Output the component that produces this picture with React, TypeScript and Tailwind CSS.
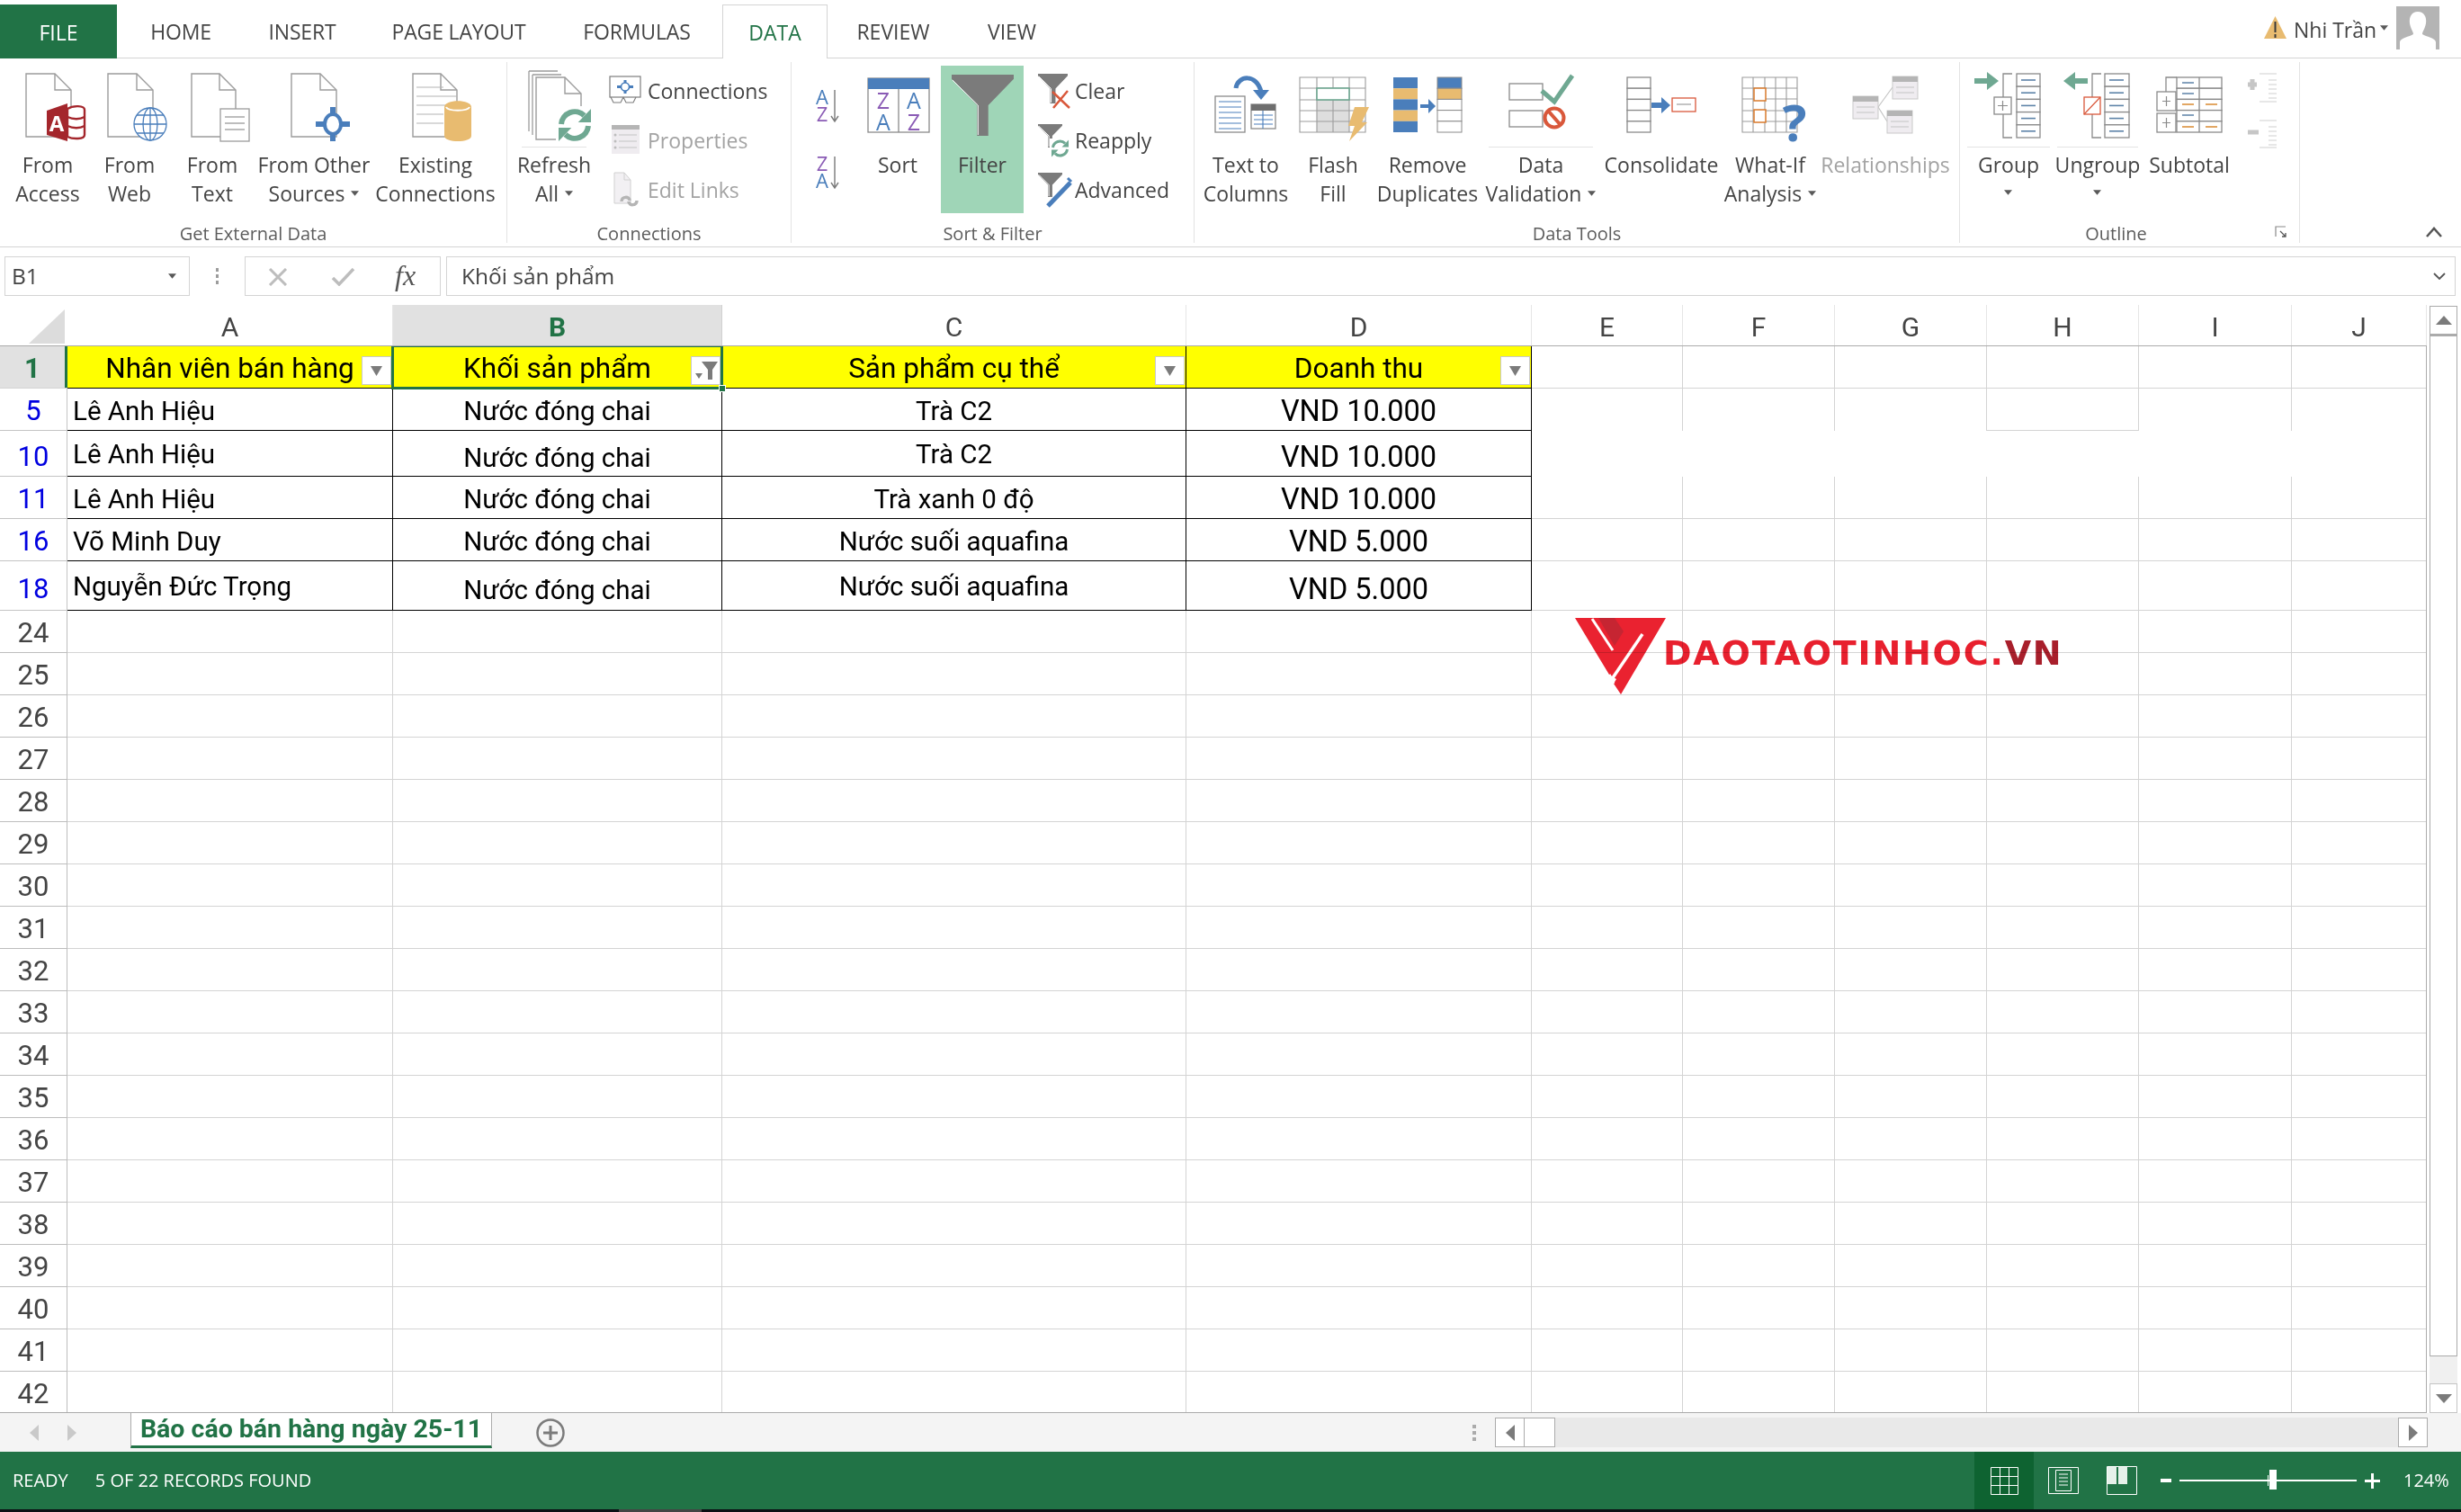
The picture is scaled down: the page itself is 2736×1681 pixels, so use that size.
import type { ReactNode } from 'react'

const BLUE = '#4a7ebb'
const GOLD = '#e8bb70'
const TEAL = '#6fa892'

const Ic = ({ children }: { children: ReactNode }) => (
  <svg viewBox="-50 0 100 80" className="w-[100px] h-[80px] shrink-0 overflow-visible">{children}</svg>
)

const Sm = ({ children }: { children: ReactNode }) => (
  <svg viewBox="0 0 40 36" className="w-[40px] h-[36px] shrink-0 overflow-visible">{children}</svg>
)

const Doc = ({ x, y, w, h, f = 18 }: { x: number; y: number; w: number; h: number; f?: number }) => (
  <g fill="none" stroke="#9c9c9c" strokeWidth="1.4">
    <path d={`M${x} ${y}H${x + w - f}L${x + w} ${y + f}V${y + h}H${x}Z`} fill="#fff" />
    <path d={`M${x + w - f} ${y}V${y + f}H${x + w}`} />
  </g>
)

const Caret = ({ disabled }: { disabled?: boolean }) => (
  <svg viewBox="0 0 10 6" className="inline-block w-[9px] h-[6px] shrink-0">
    <path d="M0 0H10L5 6Z" fill={disabled ? '#aaa' : '#595959'} />
  </svg>
)

const Funnel = ({ x, y, w, h }: { x: number; y: number; w: number; h: number }) => {
  const cx = x + w / 2
  const nw = w * 0.09
  return (
    <g>
      <path
        d={`M${x} ${y}H${x + w}V${y + h * 0.07}L${cx + nw} ${y + h * 0.5}V${y + h}H${cx - nw}V${y + h * 0.5}L${x} ${y + h * 0.07}Z`}
        fill="#7b7b7b"
      />
      <path d={`M${x + 1} ${y + h * 0.09}L${cx - nw + 1} ${y + h * 0.5}V${y + h - 1}`} fill="none" stroke="#fff" strokeWidth="1" />
    </g>
  )
}

const Cycle = ({ cx, cy, r, w, color }: { cx: number; cy: number; r: number; w: number; color: string }) => (
  <g fill="none" stroke={color} strokeWidth={w}>
    <path d={`M${cx - r} ${cy - 1}A${r} ${r} 0 0 1 ${cx + r * 0.7} ${cy - r * 0.7}`} />
    <path d={`M${cx + r} ${cy + 1}A${r} ${r} 0 0 1 ${cx - r * 0.7} ${cy + r * 0.7}`} />
    <path d={`M${cx + r * 0.25} ${cy - r * 0.2}H${cx + r + w / 2}V${cy - r - w / 2}Z`} fill={color} stroke="none" />
    <path d={`M${cx - r * 0.25} ${cy + r * 0.2}H${cx - r - w / 2}V${cy + r + w / 2}Z`} fill={color} stroke="none" />
  </g>
)

const Rows = ({ x, y, w, rows, h, color = '#8a8a8a' }: { x: number; y: number; w: number; rows: number; h: number; color?: string }) => (
  <g fill="#fff" stroke={color} strokeWidth="1.3">
    {Array.from({ length: rows }, (_, i) => (
      <rect key={i} x={x} y={y + (h / rows) * i} width={w} height={h / rows} />
    ))}
  </g>
)

const FromAccess = () => (
  <Ic>
    <Doc x={-24} y={2} w={50} h={70} />
    <path d="M-1 43L22 35V77L-1 70Z" fill="#a4262c" />
    <path d="M22 41C28 37 41 37 41 42V70C41 75 28 75 22 72Z" fill="#fff" stroke="#a4262c" strokeWidth="2.4" />
    <path d="M22 50C28 53 36 53 41 50M22 60C28 63 36 63 41 60" fill="none" stroke="#a4262c" strokeWidth="2.4" />
    <text x="10" y="66" textAnchor="middle" fill="#fff" fontSize="24" fontWeight="700" fontFamily="Open Sans">A</text>
  </Ic>
)

const FromWeb = () => (
  <Ic>
    <Doc x={-24} y={2} w={50} h={70} />
    <g fill="#fff" stroke={BLUE} strokeWidth="1.3">
      <circle cx="23" cy="58" r="18" />
      <ellipse cx="23" cy="58" rx="8" ry="18" />
      <path d="M23 40V76M5 58H41M8 48H38M8 68H38" fill="none" />
    </g>
  </Ic>
)

const FromText = () => (
  <Ic>
    <Doc x={-23} y={2} w={49} h={70} />
    <rect x="9" y="41" width="32" height="36" fill="#fff" stroke="#9c9c9c" strokeWidth="1.3" />
    <path d="M14 50H36M14 57H36M14 64H36" stroke="#a8a8a8" strokeWidth="1.3" />
  </Ic>
)

const FromOther = () => (
  <Ic>
    <Doc x={-25} y={2} w={50} h={70} />
    <path d="M21 39V77M2 58H40" stroke={BLUE} strokeWidth="6" />
    <ellipse cx="21" cy="58" rx="9" ry="11" fill="#fff" stroke={BLUE} strokeWidth="4" />
  </Ic>
)

const Existing = () => (
  <Ic>
    <Doc x={-25} y={2} w={49} h={70} />
    <path d="M-21 17H9M-21 27H24M-21 37H24M-21 47H9M-21 57H9" stroke="#b4b4b4" strokeWidth="1.2" />
    <path d="M10 39C10 30 40 30 40 39V71C40 79 10 79 10 71Z" fill={GOLD} />
    <path d="M12 39C14 44 36 44 38 39" fill="none" stroke="#fff" strokeWidth="2" />
  </Ic>
)

const Refresh = () => (
  <Ic>
    <path d="M-28 -1H4M-28 -1V66M-24 3H8M-24 3V70" fill="none" stroke="#9c9c9c" strokeWidth="1.3" />
    <Doc x={-20} y={6} w={50} h={69} />
    <rect x="2" y="38" width="38" height="40" fill="#fff" />
    <Cycle cx={23} cy={59} r={15} w={6} color={TEAL} />
  </Ic>
)

const SortAsc = ({ top, bottom, topCol, botCol }: { top: string; bottom: string; topCol: string; botCol: string }) => (
  <svg viewBox="0 0 40 40" className="w-[40px] h-[40px] shrink-0">
    <text x="14" y="18" textAnchor="middle" fontSize="22" fill={topCol} fontFamily="Open Sans">{top}</text>
    <text x="14" y="37" textAnchor="middle" fontSize="22" fill={botCol} fontFamily="Open Sans">{bottom}</text>
    <path d="M28 2V36M24 31L28 37L32 31" fill="none" stroke="#7a7a7a" strokeWidth="1.4" />
  </svg>
)

const SortBig = () => (
  <Ic>
    <rect x="-33" y="7" width="68" height="60" fill="#fff" stroke="#8a8a8a" strokeWidth="1.3" />
    <rect x="-33" y="7" width="68" height="12" fill={BLUE} />
    <path d="M1 19V67" stroke="#8a8a8a" strokeWidth="1.3" />
    <g fontSize="25" fontFamily="Open Sans" textAnchor="middle">
      <text x="-16" y="41" fill="#8a5bb5">Z</text>
      <text x="18" y="41" fill={BLUE}>A</text>
      <text x="-16" y="65" fill={BLUE}>A</text>
      <text x="18" y="65" fill="#8a5bb5">Z</text>
    </g>
  </Ic>
)

const FilterBig = () => (
  <Ic>
    <Funnel x={-34} y={3} w={69} h={68} />
  </Ic>
)

const TextToCols = () => (
  <Ic>
    <rect x="-34" y="27" width="33" height="40" fill="#fff" stroke="#8a8a8a" strokeWidth="1.3" />
    <path d="M-30 33H-5M-30 39H-5M-30 45H-5M-30 51H-5M-30 57H-5M-30 63H-5" stroke={BLUE} strokeWidth="1.2" />
    <rect x="6" y="36" width="27" height="27" fill="#fff" stroke="#8a8a8a" strokeWidth="1.3" />
    <rect x="6" y="36" width="27" height="7" fill="#6e6e6e" />
    <path d="M9 48H30M9 53H30M9 58H30M19 43V63" stroke={BLUE} strokeWidth="1.1" />
    <path d="M-11 18C-9 4 12 1 17 22" fill="none" stroke={BLUE} strokeWidth="5" />
    <path d="M8 20H26L17 31Z" fill={BLUE} />
  </Ic>
)

const FlashFill = () => (
  <Ic>
    <rect x="-37" y="6" width="73" height="61" fill="#fff" />
    <rect x="-18" y="31" width="36" height="36" fill="#dedede" />
    <path d="M-37 6H36V67H-37ZM-18 6V67M0 6V67M18 6V67M-37 18H36M-37 31H36M-37 43H36M-37 55H36" fill="none" stroke="#9c9c9c" strokeWidth="1.1" />
    <rect x="-18" y="18" width="36" height="13" fill="#fff" stroke={TEAL} strokeWidth="1.6" />
    <path d="M24 39H40L32 56H38L18 77L24 60H17Z" fill={GOLD} />
  </Ic>
)

const RemoveDup = () => {
  const left = [BLUE, GOLD, BLUE, GOLD, BLUE]
  const right = [BLUE, GOLD, '#fff', '#fff', '#fff']
  return (
    <Ic>
      {left.map((c, i) => (
        <rect key={i} x="-38" y={6 + i * 12.2} width="27" height="12.2" fill={c} />
      ))}
      {right.map((c, i) => (
        <rect key={i} x="11" y={6 + i * 12.2} width="27" height="12.2" fill={c} stroke="#8a8a8a" strokeWidth="1" />
      ))}
      <path d="M-8 36H1V30L9 38L1 46V40H-8Z" fill={BLUE} />
    </Ic>
  )
}

const DataValidation = () => (
  <Ic>
    <rect x="-35" y="13" width="37" height="18" fill="#fff" stroke="#8a8a8a" strokeWidth="1.3" />
    <rect x="-35" y="43" width="37" height="18" fill="#fff" stroke="#8a8a8a" strokeWidth="1.3" />
    <path d="M1 21L15 33L35 4" fill="none" stroke={TEAL} strokeWidth="5" />
    <circle cx="15" cy="51" r="10.5" fill="#fff" stroke="#d9583b" strokeWidth="4" />
    <path d="M8 43L22 59" stroke="#d9583b" strokeWidth="4" />
  </Ic>
)

const Consolidate = () => (
  <Ic>
    <Rows x={-38} y={6} w={26} rows={5} h={61} />
    <path d="M-11 34H0V28L10 37L0 46V40H-11Z" fill={BLUE} />
    <rect x="12" y="29" width="26" height="15" fill="#fff" stroke="#d9583b" strokeWidth="1.3" />
    <path d="M17 36H33" stroke="#9c9c9c" strokeWidth="1.2" />
  </Ic>
)

const WhatIf = () => (
  <Ic>
    <path d="M-31 6H30V67H-31ZM-19 6V67M-6 6V67M6 6V67M18 6V67M-31 18H30M-31 30H30M-31 43H30M-31 55H30" fill="#fff" stroke="#9c9c9c" strokeWidth="1.1" />
    <rect x="-18" y="18" width="13" height="14" fill="#fff" stroke="#d97a2b" strokeWidth="1.5" />
    <rect x="-18" y="42" width="13" height="14" fill="#fff" stroke="#d97a2b" strokeWidth="1.5" />
    <text x="27" y="77" textAnchor="middle" fontSize="56" fontWeight="700" fill={BLUE} fontFamily="Open Sans">?</text>
  </Ic>
)

const MiniTable = ({ x, y }: { x: number; y: number }) => (
  <g>
    <rect x={x} y={y} width="28" height="25" fill="#efecf0" stroke="#c9c9c9" strokeWidth="1" />
    <rect x={x} y={y} width="28" height="6" fill="#b5b5b5" />
    <path d={`M${x + 4} ${y + 12}H${x + 24}M${x + 4} ${y + 18}H${x + 24}`} stroke="#c4c4c4" strokeWidth="1.2" />
  </g>
)

const Relationships = () => (
  <Ic>
    <path d="M-8 39L8 17M-8 39L2 55" fill="none" stroke="#c4c4c4" strokeWidth="1.2" />
    <MiniTable x={-36} y={27} />
    <MiniTable x={8} y={5} />
    <MiniTable x={2} y={43} />
  </Ic>
)

const Dashes = ({ x, y, n, color = '#5d83a8' }: { x: number; y: number; n: number; color?: string }) => (
  <g>
    {Array.from({ length: n }, (_, i) => (
      <path key={i} d={`M${x} ${y + i * 14.2}H${x + 16}`} stroke={color} strokeWidth="1.6" />
    ))}
  </g>
)

const GroupIcon = () => (
  <Ic>
    <path d="M-38 7H-24V0L-11 10L-24 20V13H-38Z" fill={TEAL} />
    <path d="M4 2H-6V73H4" fill="none" stroke="#8a8a8a" strokeWidth="1.3" />
    <rect x="-16" y="28" width="19" height="19" fill="#fff" stroke="#8a8a8a" strokeWidth="1.3" />
    <path d="M-12 37.5H-1M-6.5 32V43" stroke="#8a8a8a" strokeWidth="1.2" />
    <Rows x={9} y={2} w={26} rows={5} h={71} />
    <Dashes x={14} y={9} n={5} />
  </Ic>
)

const UngroupIcon = () => (
  <Ic>
    <path d="M-11 7H-25V0L-38 10L-25 20V13H-11Z" fill={TEAL} />
    <path d="M4 2H-6V73H4" fill="none" stroke="#8a8a8a" strokeWidth="1.3" />
    <rect x="-15" y="28" width="18" height="19" fill="#fff" stroke="#d9583b" strokeWidth="1.3" />
    <path d="M-15 47L3 28" stroke="#d9583b" strokeWidth="1.2" />
    <Rows x={8} y={2} w={27} rows={5} h={71} />
    <Dashes x={13} y={9} n={5} />
  </Ic>
)

const Subtotal = () => (
  <Ic>
    <path d="M-14 6H-26V22" fill="none" stroke="#8a8a8a" strokeWidth="1.3" />
    <Rows x={-14} y={6} w={50} rows={5} h={61} />
    <path d="M11 6V67" stroke="#8a8a8a" strokeWidth="1.3" />
    <rect x="-36" y="22" width="21" height="21" fill="#fff" stroke="#8a8a8a" strokeWidth="1.3" />
    <rect x="-36" y="46" width="21" height="21" fill="#fff" stroke="#8a8a8a" strokeWidth="1.3" />
    <path d="M-30 32.5H-21M-25.500 27V38M-30 56.500H-21M-25.500 51V62" stroke="#8a8a8a" strokeWidth="1.2" />
    <path d="M-8 12H5M-8 24H5M-8 48H5" stroke="#5d83a8" strokeWidth="1.5" />
    <path d="M-8 36H5M18 36H31M-8 61H5M18 61H31" stroke="#d98a32" strokeWidth="1.5" />
  </Ic>
)

const DetailIcon = () => (
  <svg viewBox="0 0 34 84" className="w-[34px] h-[84px] shrink-0">
    <path d="M1 13H11M6 7V19" stroke="#c6c6c6" strokeWidth="5" />
    <path d="M14 1H33M24 8H33M24 13H33M24 18H33M24 23H33M24 28H33M14 32H33" stroke="#cfcfcf" strokeWidth="1.1" />
    <path d="M1 66H13" stroke="#c6c6c6" strokeWidth="5" />
    <path d="M14 53H33M24 60H33M24 65H33M24 70H33M24 75H33M24 80H33M14 83H33" stroke="#cfcfcf" strokeWidth="1.1" />
  </svg>
)

const ConnSmall = () => (
  <Sm>
    <rect x="6" y="1" width="34" height="23" fill="#fff" stroke="#7d7d7d" strokeWidth="1.2" />
    <path d="M23 5V20M14 12.500H32" stroke={BLUE} strokeWidth="3" />
    <circle cx="23" cy="12.500" r="4.500" fill="#fff" stroke={BLUE} strokeWidth="1.6" />
    <path d="M7 24L10 30H18L21 24M21 24L24 30H32L35 24" fill="none" stroke="#7d7d7d" strokeWidth="1.1" />
  </Sm>
)

const PropsSmall = () => (
  <Sm>
    <rect x="8" y="0" width="31" height="32" fill="#efecf0" />
    <rect x="8" y="0" width="31" height="5" fill="#b5b5b5" />
    <path d="M16 11H36M16 18H36M16 25H36" stroke="#c4c4c4" strokeWidth="1.2" />
    <circle cx="12" cy="11" r="1.500" fill="#bdbdbd" />
    <circle cx="12" cy="18" r="1.500" fill="#bdbdbd" />
    <circle cx="12" cy="25" r="1.500" fill="#bdbdbd" />
  </Sm>
)

const LinksSmall = () => (
  <Sm>
    <path d="M11 -2H22L29 6V32H11Z" fill="#f2f0f3" stroke="#d0d0d0" strokeWidth="1" />
    <path d="M22 -2V6H29" fill="none" stroke="#d0d0d0" strokeWidth="1" />
    <path d="M19 30C19 24 28 24 28 29M36 29C36 35 27 35 27 30" fill="none" stroke="#b5b5b5" strokeWidth="3.500" />
  </Sm>
)

const ClearSmall = () => (
  <Sm>
    <Funnel x={4} y={-2} w={33} h={33} />
    <path d="M20 18L39 36M37 17L21 36" stroke="#d9583b" strokeWidth="2.500" />
  </Sm>
)

const ReapplySmall = () => (
  <Sm>
    <Funnel x={4} y={-1} w={27} h={26} />
    <rect x="17" y="15" width="23" height="22" fill="#fff" />
    <Cycle cx={28.500} cy={26} r={8} w={3} color={TEAL} />
  </Sm>
)

const AdvancedSmall = () => (
  <Sm>
    <Funnel x={4} y={-2} w={27} h={27} />
    <path d="M40 9L15 35" stroke={BLUE} strokeWidth="5" />
    <path d="M37 4L41 8" stroke={BLUE} strokeWidth="3" />
  </Sm>
)

const Big = ({
  w,
  icon,
  lines,
  caretLine,
  split,
  disabled,
}: {
  w: string
  icon: ReactNode
  lines: string[]
  caretLine?: number
  split?: boolean
  disabled?: boolean
}) => (
  <div className={`relative flex flex-col items-center pt-[11px] shrink-0 ${w}`}>
    {icon}
    {split && <div className="absolute left-[4px] right-[4px] top-[94px] h-px bg-[#e4e4e4]" />}
    <div className={`mt-[7px] flex flex-col items-center text-[23px] leading-[32px] whitespace-nowrap ${disabled ? 'text-[#a3a3a3]' : 'text-[#444]'}`}>
      {lines.map((l, i) => (
        <span key={i} className="flex items-center gap-[7px] h-[32px]">
          {l}
          {caretLine === i && <Caret />}
        </span>
      ))}
    </div>
  </div>
)

const SmallBtn = ({ icon, label, disabled, gap }: { icon: ReactNode; label: string; disabled?: boolean; gap: string }) => (
  <div className="flex items-center h-[55px]">
    {icon}
    <span className={`text-[23px] whitespace-nowrap ${gap} ${disabled ? 'text-[#a3a3a3]' : 'text-[#444]'}`}>{label}</span>
  </div>
)

const Group = ({ w, label, pad, labelPad, children }: { w: string; label: string; pad: string; labelPad?: string; children: ReactNode }) => (
  <div className={`flex flex-col shrink-0 border-r border-[#e3e3e3] ${w}`}>
    <div className={`flex flex-1 ${pad}`}>{children}</div>
    <div className={`h-[20px] text-center text-[20px] leading-[20px] text-[#5c5c5c] ${labelPad ?? ''}`}>{label}</div>
  </div>
)

const tabs = [
  { name: 'HOME', w: 'w-[142px]' },
  { name: 'INSERT', w: 'w-[128px]' },
  { name: 'PAGE LAYOUT', w: 'w-[220px]' },
  { name: 'FORMULAS', w: 'w-[176px]' },
]

const TopBar = () => (
  <div className="flex items-end h-[65px] border-b border-[#d4d4d4] shrink-0 text-[23px] text-[#444]">
    <div className="w-[130px] h-[60px] -mb-px bg-[#217346] text-white flex items-center justify-center pt-[2px]">FILE</div>
    {tabs.map(t => (
      <div key={t.name} className={`h-[60px] flex items-center justify-center pt-[2px] tracking-[-0.15px] ${t.w}`}>{t.name}</div>
    ))}
    <div className="w-[7px]" />
    <div className="w-[117px] h-[60px] -mb-px bg-white border border-b-0 border-[#d4d4d4] text-[#217346] flex items-center justify-center pt-[2px]">DATA</div>
    <div className="w-[146px] h-[60px] flex items-center justify-center pt-[2px]">REVIEW</div>
    <div className="w-[118px] h-[60px] flex items-center justify-center pt-[2px]">VIEW</div>
    <div className="ml-auto flex items-center h-[60px] pr-[24px] mb-[3px]">
      <svg viewBox="0 0 25 26" className="w-[25px] h-[26px] mr-[8px]">
        <path d="M12.500 0L25 25H0Z" fill={GOLD} />
        <path d="M12.500 6V18M12.500 20V24" stroke="#3a3a3a" strokeWidth="2" />
      </svg>
      <span className="w-[89px] pt-[5px] text-[23px] whitespace-nowrap">Nhi Trần</span>
      <span className="ml-[7px] mr-[9px] flex"><Caret /></span>
      <svg viewBox="0 0 48 48" className="w-[48px] h-[48px]">
        <rect width="48" height="48" fill="#b4b4b4" />
        <path d="M24 6C31 6 34 12 33 19C32 25 29 28 29 31C33 34 44 35 44 40V48H4V40C4 35 15 34 19 31C19 28 16 25 15 19C14 12 17 6 24 6Z" fill="#fff" />
      </svg>
    </div>
  </div>
)

const Ribbon = () => (
  <div className="relative flex h-[210px] shrink-0 py-[4px] border-b border-[#d4d4d4]">
    <Group w="w-[564px]" label="Get External Data" pad="pl-[8px]">
      <Big w="w-[90px]" icon={<FromAccess />} lines={['From', 'Access']} />
      <Big w="w-[92px]" icon={<FromWeb />} lines={['From', 'Web']} />
      <Big w="w-[92px]" icon={<FromText />} lines={['From', 'Text']} />
      <Big w="w-[132px] ml-[1px]" icon={<FromOther />} lines={['From Other', 'Sources']} caretLine={1} />
      <Big w="w-[138px]" icon={<Existing />} lines={['Existing', 'Connections']} />
    </Group>
    <Group w="w-[316px]" label="Connections" pad="pl-[12px]">
      <Big w="w-[80px]" icon={<Refresh />} lines={['Refresh', 'All']} caretLine={1} split />
      <div className="ml-[16px] mt-[5px] flex flex-col">
        <SmallBtn icon={<ConnSmall />} label="Connections" gap="ml-[8px]" />
        <SmallBtn icon={<PropsSmall />} label="Properties" gap="ml-[8px]" disabled />
        <SmallBtn icon={<LinksSmall />} label="Edit Links" gap="ml-[8px]" disabled />
      </div>
    </Group>
    <Group w="w-[448px]" label="Sort & Filter" pad="pl-[10px]">
      <div className="w-[60px] flex flex-col items-center pt-[29px] gap-[34px]">
        <SortAsc top="A" bottom="Z" topCol={BLUE} botCol="#8a5bb5" />
        <SortAsc top="Z" bottom="A" topCol="#8a5bb5" botCol={BLUE} />
      </div>
      <Big w="w-[96px]" icon={<SortBig />} lines={['Sort']} />
      <div className="flex flex-col items-center w-[92px] h-[164px] mt-[4px] pt-[7px] bg-[#9fd5b7] shrink-0">
        <FilterBig />
        <span className="mt-[7px] text-[23px] leading-[32px] text-[#444]">Filter</span>
      </div>
      <div className="ml-[12px] mt-[5px] flex flex-col">
        <SmallBtn icon={<ClearSmall />} label="Clear" gap="ml-[5px]" />
        <SmallBtn icon={<ReapplySmall />} label="Reapply" gap="ml-[5px]" />
        <SmallBtn icon={<AdvancedSmall />} label="Advanced" gap="ml-[5px]" />
      </div>
    </Group>
    <Group w="w-[851px]" label="Data Tools" pad="pl-[1px]">
      <Big w="w-[112px]" icon={<TextToCols />} lines={['Text to', 'Columns']} />
      <Big w="w-[82px]" icon={<FlashFill />} lines={['Flash', 'Fill']} />
      <Big w="w-[128px]" icon={<RemoveDup />} lines={['Remove', 'Duplicates']} />
      <Big w="w-[124px]" icon={<DataValidation />} lines={['Data', 'Validation']} caretLine={1} split />
      <Big w="w-[144px]" icon={<Consolidate />} lines={['Consolidate']} />
      <Big w="w-[98px]" icon={<WhatIf />} lines={['What-If', 'Analysis']} caretLine={1} />
      <Big w="w-[158px]" icon={<Relationships />} lines={['Relationships']} disabled />
    </Group>
    <Group w="w-[378px]" label="Outline" pad="pl-[4px]" labelPad="pr-[30px]">
      <Big w="w-[100px]" icon={<GroupIcon />} lines={['Group']} split />
      <Big w="w-[98px]" icon={<UngroupIcon />} lines={['Ungroup']} split />
      <Big w="w-[106px]" icon={<Subtotal />} lines={['Subtotal']} />
      <div className="w-[56px] flex justify-center pt-[12px]">
        <DetailIcon />
      </div>
    </Group>
    {/* little carets under Group / Ungroup and the launcher + collapse arrow */}
    <div className="absolute left-[2228px] top-[146px] flex"><Caret /></div>
    <div className="absolute left-[2327px] top-[146px] flex"><Caret /></div>
    <svg viewBox="0 0 14 14" className="absolute left-[2529px] top-[186px] w-[14px] h-[14px]">
      <path d="M1 12V1H12" fill="none" stroke="#8a8a8a" strokeWidth="1.2" />
      <path d="M6 6L12 12M12 8V12H8" fill="none" stroke="#555" strokeWidth="1.3" />
    </svg>
    <svg viewBox="0 0 18 12" className="absolute left-[2697px] top-[187px] w-[18px] h-[12px]">
      <path d="M1 11L9 2L17 11" fill="none" stroke="#555" strokeWidth="2.500" />
    </svg>
  </div>
)

const FormulaBar = () => (
  <div className="flex h-[64px] shrink-0 pt-[10px] pl-[5px] pr-[6px]">
    <div className="w-[206px] h-[44px] border border-[#d4d4d4] flex items-center pl-[7px] pr-[14px] text-[24.5px] text-[#444]">
      B1
      <span className="ml-auto flex"><Caret /></span>
    </div>
    <div className="w-[61px] h-[44px] flex flex-col items-center justify-center gap-[3px]">
      <span className="w-[3px] h-[4px] bg-[#9c9c9c]" />
      <span className="w-[3px] h-[4px] bg-[#9c9c9c]" />
      <span className="w-[3px] h-[4px] bg-[#9c9c9c]" />
    </div>
    <div className="w-[218px] h-[44px] border border-[#d4d4d4] flex items-center relative">
      <svg viewBox="0 0 22 20" className="absolute left-[25px] top-[12px] w-[22px] h-[20px]">
        <path d="M2 1L20 19M20 1L2 19" stroke="#bdbdbd" strokeWidth="3" />
      </svg>
      <svg viewBox="0 0 27 20" className="absolute left-[95px] top-[12px] w-[27px] h-[20px]">
        <path d="M2 11L9 18L25 1" fill="none" stroke="#bdbdbd" strokeWidth="3.500" />
      </svg>
      <span className="absolute left-[166px] top-[0px] text-[32px] leading-[40px] italic text-[#555] font-['Liberation_Serif',serif]">fx</span>
    </div>
    <div className="ml-[6px] flex-1 h-[44px] border border-[#d4d4d4] flex items-center pl-[16px] pr-[10px] text-[24.5px] text-[#444]">
      Khối sản phẩm
      <svg viewBox="0 0 14 8" className="ml-auto w-[14px] h-[8px]">
        <path d="M1 1L7 7L13 1" fill="none" stroke="#555" strokeWidth="1.800" />
      </svg>
    </div>
  </div>
)

const letters = ['A', 'B', 'C', 'D', 'E', 'F', 'G', 'H', 'I', 'J']
const gridCols = 'grid grid-cols-[75px_362px_366px_516px_384px_168px_169px_169px_169px_170px_150px]'

const ColumnHeader = () => (
  <div className={`${gridCols} h-[46px] shrink-0 border-b border-[#ababab]`}>
    <div className="relative">
      <svg viewBox="0 0 40 38" className="absolute left-[32px] top-[5px] w-[40px] h-[38px]">
        <path d="M40 0V38H0Z" fill="#dcdcdc" />
      </svg>
    </div>
    {letters.map(l => (
      <div
        key={l}
        className={`flex items-center justify-center border-r pt-[4px] text-[30px] leading-[36px] font-['Roboto',sans-serif] ${l === 'B' ? 'bg-[#e1e1e1] border-[#d0d0d0] text-[#217346] font-bold' : 'border-[#e6e6e6] text-[#444]'}`}
      >
        {l}
      </div>
    ))}
  </div>
)

const FilterBtn = ({ active }: { active?: boolean }) => (
  <div className="absolute right-[1px] top-[11px] w-[33px] h-[32px] bg-white border border-[#c9c9c9] flex items-center justify-center">
    {active ? (
      <svg viewBox="0 0 28 24" className="w-[28px] h-[24px]">
        <path d="M9 2H27L21 11V22H16V11Z" fill="#7b7b7b" />
        <path d="M2 15H10L6 21Z" fill="#7b7b7b" />
      </svg>
    ) : (
      <svg viewBox="0 0 12 10" className="w-[13px] h-[11px]">
        <path d="M0 0H12L6 10Z" fill="#7b7b7b" />
      </svg>
    )}
  </div>
)

const HeaderRow = () => (
  <div className={`${gridCols} h-[47px] shrink-0 border-b border-[#d4d4d4] font-['Roboto',sans-serif] text-[31.5px] leading-[36px] text-black`}>
    <div className="bg-[#e1e1e1] border-r-[3px] border-[#217346] flex items-center justify-center pt-[3px] text-[#217346] font-bold text-[31px]">1</div>
    {['Nhân viên bán hàng', 'Khối sản phẩm', 'Sản phẩm cụ thể', 'Doanh thu'].map((t, i) => (
      <div
        key={t}
        className={`relative flex items-center justify-center pt-[3px] bg-[#ffff00] border-b border-black -mb-px ${i > 0 ? 'border-r border-black' : 'border-r border-[#bcbc40]'}`}
      >
        {t}
        <FilterBtn active={i === 1} />
      </div>
    ))}
    {[0, 1, 2, 3, 4, 5].map(i => (
      <div key={i} className="border-r border-[#d4d4d4]" />
    ))}
  </div>
)

const dataRows = [
  { n: '5', h: 'h-[47px]', a: 'Lê Anh Hiệu', b: 'Nước đóng chai', c: 'Trà C2', d: 'VND 10.000', shiftA: 'pt-[3px]', shiftB: 'pt-[3px]', shiftD: 'pt-[3px]', num: 'pt-[3px]', kind: 'top' },
  { n: '10', h: 'h-[51px]', a: 'Lê Anh Hiệu', b: 'Nước đóng chai', c: 'Trà C2', d: 'VND 10.000', shiftA: 'pt-[1px]', shiftB: 'pt-[9px]', shiftD: 'pt-[7px]', num: 'pt-[7px]', kind: 'blank' },
  { n: '11', h: 'h-[47px]', a: 'Lê Anh Hiệu', b: 'Nước đóng chai', c: 'Trà xanh 0 độ', d: 'VND 10.000', shiftA: 'pt-[3px]', shiftB: 'pt-[3px]', shiftD: 'pt-[3px]', num: 'pt-[3px]', kind: 'open' },
  { n: '16', h: 'h-[47px]', a: 'Võ Minh Duy', b: 'Nước đóng chai', c: 'Nước suối aquafina', d: 'VND 5.000', shiftA: 'pt-[3px]', shiftB: 'pt-[3px]', shiftD: 'pt-[3px]', num: 'pt-[3px]', kind: 'plain' },
  { n: '18', h: 'h-[55px]', a: 'Nguyễn Đức Trọng', b: 'Nước đóng chai', c: 'Nước suối aquafina', d: 'VND 5.000', shiftA: 'pt-[1px]', shiftB: 'pt-[10px]', shiftD: 'pt-[7px]', num: 'pt-[7px]', kind: 'plain' },
]

const extraCell = (kind: string, i: number) => {
  if (kind === 'blank') return ''
  if (kind === 'top') return i === 3 ? 'border-r border-b border-[#d4d4d4]' : 'border-r border-[#d4d4d4]'
  return 'border-r border-b border-[#d4d4d4]'
}

const DataRows = () => (
  <>
    {dataRows.map(r => (
      <div key={r.n} className={`${gridCols} ${r.h} shrink-0 font-['Roboto',sans-serif] text-[29.5px] leading-[36px] text-black`}>
        <div className={`flex items-center justify-center border-r border-b border-[#c4c4c4] text-[#0000e0] text-[31px] ${r.num}`}>{r.n}</div>
        <div className={`flex items-center pl-[6px] border-r border-b border-black ${r.shiftA}`}>{r.a}</div>
        <div className={`flex items-center justify-center border-r border-b border-black ${r.shiftB}`}>{r.b}</div>
        <div className={`flex items-center justify-center border-r border-b border-black ${r.shiftA}`}>{r.c}</div>
        <div className={`flex items-center justify-center border-r border-b border-black text-[32.5px] ${r.shiftD}`}>{r.d}</div>
        {[0, 1, 2, 3, 4, 5].map(i => (
          <div key={i} className={extraCell(r.kind, i)} />
        ))}
      </div>
    ))}
  </>
)

const emptyRows = Array.from({ length: 19 }, (_, i) => 24 + i)

const EmptyRows = () => (
  <>
    {emptyRows.map(n => (
      <div key={n} className={`${gridCols} h-[47px] shrink-0`}>
        <div className="flex items-center justify-center pt-[4px] border-r border-b border-[#bdbdbd] text-[#444] text-[31px] leading-[36px] font-['Roboto',sans-serif]">{n}</div>
        {[0, 1, 2, 3, 4, 5, 6, 7, 8, 9].map(i => (
          <div key={i} className="border-r border-b border-[#d4d4d4]" />
        ))}
      </div>
    ))}
  </>
)

const Arrow = ({ dir, color = '#7b7b7b' }: { dir: 'up' | 'down' | 'left' | 'right'; color?: string }) => {
  const paths = { up: 'M0 10H18L9 0Z', down: 'M0 0H18L9 10Z', left: 'M10 0V18L0 9Z', right: 'M0 0V18L10 9Z' }
  const box = dir === 'up' || dir === 'down' ? 'w-[18px] h-[10px]' : 'w-[10px] h-[18px]'
  const vb = dir === 'up' || dir === 'down' ? '0 0 18 10' : '0 0 10 18'
  return (
    <svg viewBox={vb} className={box}>
      <path d={paths[dir]} fill={color} />
    </svg>
  )
}

const Scrollbar = () => (
  <div className="w-[38px] shrink-0 flex flex-col pl-[3px] pr-[4px] pt-px bg-white">
    <div className="h-[32px] border border-[#ababab] flex items-center justify-center shrink-0">
      <Arrow dir="up" />
    </div>
    <div className="flex-1 border border-t-[2px] border-[#ababab]" />
    <div className="h-[30px] bg-[#f0f0f0] shrink-0" />
    <div className="h-[33px] border border-[#c4c4c4] flex items-center justify-center shrink-0 bg-white">
      <Arrow dir="down" />
    </div>
  </div>
)

const Logo = () => (
  <div className="absolute left-[1751px] top-[687px] w-[545px] h-[85px] pointer-events-none mix-blend-multiply">
    <svg viewBox="0 0 101 85" className="absolute left-0 top-0 w-[101px] h-[85px] blur-[0.4px]">
      <path d="M0 0H101L51 85L43 73L46 68L38 63Z" fill="#ea2230" />
      <path d="M26 0H44L54 15L44 31Z" fill="#c62532" />
      <path d="M19 1L42 36" stroke="#fff" strokeWidth="3" />
      <path d="M75 18L41 68" stroke="#fff" strokeWidth="3.500" />
      <path d="M38 63L43 73" stroke="#fff" strokeWidth="3" />
    </svg>
    <span className="absolute left-[98px] top-[16px] text-[38px] leading-[46px] font-bold tracking-[1.8px] whitespace-nowrap text-[#e8202e] blur-[0.7px] font-['DejaVu_Sans',sans-serif]">
      DAOTAOTINHOC.<span className="text-[#a81f2b]">VN</span>
    </span>
  </div>
)

const Sheet = () => (
  <div className="relative flex h-[1232px] shrink-0 overflow-hidden">
    <div className="w-[2698px] shrink-0 flex flex-col overflow-hidden border-b border-[#ababab]">
      <ColumnHeader />
      <div className="relative flex-1 border-r border-[#ababab] overflow-hidden">
        <HeaderRow />
        <DataRows />
        <EmptyRows />
        {/* active cell box */}
        <div className="absolute left-[435px] -top-[2px] w-[369px] h-[50px] border-[3px] border-[#217346] pointer-events-none" />
        <div className="absolute left-[799px] top-[43px] w-[8px] h-[8px] bg-[#217346] border border-white" />
      </div>
    </div>
    <Scrollbar />
  </div>
)

const SheetTabs = () => (
  <div className="flex items-center h-[43px] shrink-0 bg-[#f4f4f4]">
    <div className="w-[145px] flex items-center pl-[33px] gap-[32px]">
      <Arrow dir="left" color="#c9c9c9" />
      <Arrow dir="right" color="#c9c9c9" />
    </div>
    <div className="w-[402px] h-[40px] self-start -mt-px bg-white border-l border-r border-[#ababab] border-b-[3px] border-b-[#217346] flex items-center justify-center text-[28.5px] leading-[34px] font-bold text-[#217346] whitespace-nowrap font-['Roboto',sans-serif]">
      Báo cáo bán hàng ngày 25-11
    </div>
    <svg viewBox="0 0 32 32" className="ml-[49px] w-[32px] h-[32px] shrink-0">
      <circle cx="16" cy="16" r="14.500" fill="none" stroke="#7b7b7b" strokeWidth="2.500" />
      <path d="M16 8V24M8 16H24" stroke="#7b7b7b" strokeWidth="3" />
    </svg>
    <div className="ml-[1006px] w-[10px] flex flex-col items-center gap-[3px] shrink-0">
      <span className="w-[4px] h-[4px] bg-[#ababab]" />
      <span className="w-[4px] h-[4px] bg-[#ababab]" />
      <span className="w-[4px] h-[4px] bg-[#ababab]" />
    </div>
    <div className="ml-[18px] w-[1037px] h-[33px] flex shrink-0">
      <div className="w-[33px] bg-white border border-[#ababab] flex items-center justify-center"><Arrow dir="left" /></div>
      <div className="w-[34px] bg-white border border-l-0 border-[#ababab]" />
      <div className="flex-1 bg-[#e9e9e9]" />
      <div className="w-[33px] bg-white border border-[#ababab] flex items-center justify-center"><Arrow dir="right" /></div>
    </div>
  </div>
)

const StatusBar = () => (
  <div className="flex items-stretch h-[64px] shrink-0 bg-[#217346] text-white text-[20px]">
    <div className="flex items-center pl-[14px]">READY</div>
    <div className="flex items-center ml-[30px]">5 OF 22 RECORDS FOUND</div>
    <div className="ml-auto flex items-center pr-[16px]">
      <div className="w-[66px] self-stretch bg-[#0e6331] flex items-center justify-center">
        <svg viewBox="0 0 31 31" className="w-[31px] h-[31px]">
          <path d="M.5.5H30.500V30.500H.5ZM10.500.5V30.500M20.500.5V30.500M.5 10.500H30.500M.5 20.500H30.500" fill="none" stroke="#fff" strokeWidth="1" />
        </svg>
      </div>
      <svg viewBox="0 0 34 30" className="ml-[16px] w-[34px] h-[30px]">
        <path d="M.5.5H33.500V29.500H.5ZM8.500 3.500H25.500V26.500H8.500ZM12 8H22M12 12H22M12 16H22M12 20H22" fill="none" stroke="#fff" strokeWidth="1" />
      </svg>
      <svg viewBox="0 0 34 32" className="ml-[31px] w-[34px] h-[32px]">
        <path d="M.5.5H33.500V31.500H.5Z" fill="none" stroke="#fff" strokeWidth="1" />
        <rect x="1" y="1" width="10" height="19" fill="#e6f1ea" />
        <rect x="13" y="1" width="10" height="19" fill="#e6f1ea" />
      </svg>
      <div className="ml-[26px] w-[12px] h-[4px] bg-white" />
      <div className="ml-[9px] w-[197px] h-[2px] bg-white relative">
        <div className="absolute left-[100px] -top-[11px] w-[8px] h-[22px] bg-white" />
        <div className="absolute left-[98px] -top-[5px] w-px h-[12px] bg-white" />
      </div>
      <div className="ml-[9px] w-[17px] h-[17px] relative">
        <div className="absolute left-0 top-[7px] w-[17px] h-[3px] bg-white" />
        <div className="absolute left-[7px] top-0 w-[3px] h-[17px] bg-white" />
      </div>
      <div className="ml-[26px] w-[48px] text-right">124%</div>
    </div>
  </div>
)

export default function App() {
  return (
    <div className="relative w-[2736px] h-[1681px] overflow-hidden bg-white flex flex-col font-['Open_Sans',sans-serif]">
      <TopBar />
      <Ribbon />
      <FormulaBar />
      <Sheet />
      <SheetTabs />
      <StatusBar />
      <div className="h-[4px] bg-[#0b0f14] flex shrink-0">
        <div className="ml-[688px] w-[92px] bg-[#444]" />
      </div>
      <Logo />
    </div>
  )
}
